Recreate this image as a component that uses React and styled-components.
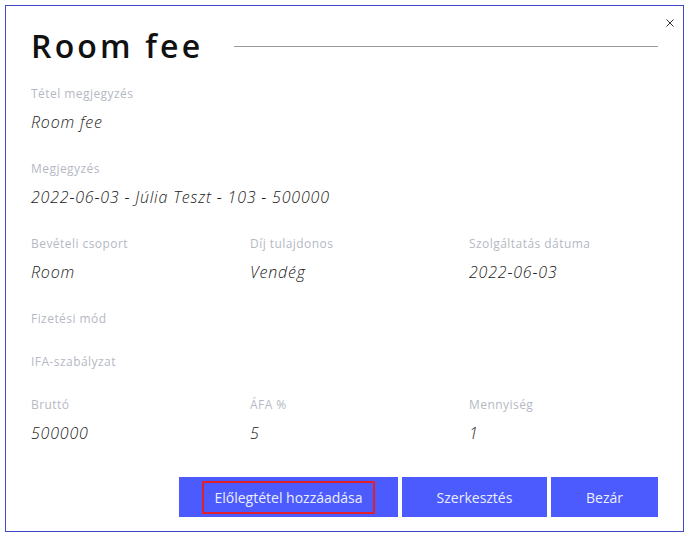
import React from "react";
import styled, { createGlobalStyle } from "styled-components";

const fields = [
    [{ label: "Tétel megjegyzés", value: "Room fee" }],
    [{ label: "Megjegyzés", value: "2022-06-03 - Júlia Teszt - 103 - 500000" }],
    [
        { label: "Bevételi csoport", value: "Room" },
        { label: "Díj tulajdonos", value: "Vendég" },
        { label: "Szolgáltatás dátuma", value: "2022-06-03" }
    ],
    [{ label: "Fizetési mód" }],
    [{ label: "IFA-szabályzat" }],
    [
        { label: "Bruttó", value: "500000" },
        { label: "ÁFA %", value: "5" },
        { label: "Mennyiség", value: "1" }
    ]
];

const buttons = [
    { text: "Előlegtétel hozzáadása", width: 219, focused: true },
    { text: "Szerkesztés", width: 145 },
    { text: "Bezár", width: 107 }
];

const App = () => (
    <>
        <GlobalStyle/>
        <Dialog>
            <Close aria-label="close">
                <svg width="8" height="8" viewBox="0 0 8 8">
                    <path d="M0.5 0.5L7.5 7.5M7.5 0.5L0.5 7.5" stroke="#333" strokeWidth="1"/>
                </svg>
            </Close>

            <Header>
                <Title>Room fee</Title>
                <Rule/>
            </Header>

            <Fields>
                { fields.map((row, i) =>
                    <Row key={i}>
                        { row.map(field =>
                            <Field key={field.label}>
                                <Label>{ field.label }</Label>
                                { field.value && <Value>{ field.value }</Value> }
                            </Field>
                        )}
                    </Row>
                )}
            </Fields>

            <Actions>
                { buttons.map(btn =>
                    <Button key={btn.text} width={btn.width}>
                        <ButtonText focused={btn.focused}>{ btn.text }</ButtonText>
                    </Button>
                )}
            </Actions>
        </Dialog>
    </>
);

const GlobalStyle = createGlobalStyle`
  body {
    margin: 0;
    background: #fff;
    font-family: "Open Sans", "DejaVu Sans", sans-serif;
  }
`;

const Dialog = styled.div`
  position: relative;
  box-sizing: border-box;
  width: 679px;
  height: 527px;
  margin: 5px;
  border: 1px solid #3f4bc4;
  padding: 20px 25px 0 25px;
  display: flex;
  flex-direction: column;
`;

const Close = styled.button`
  position: absolute;
  top: 13px;
  right: 9px;
  border: 0;
  background: none;
  padding: 0;
  display: flex;
  cursor: pointer;
`;

const Header = styled.div`
  display: flex;
  align-items: center;
  height: 40px;
`;

const Title = styled.h1`
  margin: 0;
  font-family: "Open Sans", sans-serif;
  font-size: 32px;
  line-height: 40px;
  font-weight: 600;
  letter-spacing: 3.2px;
  color: #111;
`;

const Rule = styled.div`
  flex: 1;
  height: 1px;
  margin-left: 31px;
  background: #9a9a9a;
`;

const Fields = styled.div`
  display: flex;
  flex-direction: column;
  gap: 27px;
  margin-top: 20px;
`;

const Row = styled.div`
  display: grid;
  grid-template-columns: repeat(3, 1fr);
  column-gap: 30px;
`;

const Field = styled.div`
  display: flex;
  flex-direction: column;
  gap: 9px;
`;

const Label = styled.div`
  font-size: 12px;
  line-height: 16px;
  letter-spacing: 0.45px;
  color: #b5b9c4;
  white-space: nowrap;
`;

const Value = styled.div`
  font-size: 16px;
  line-height: 23px;
  letter-spacing: 0.8px;
  font-style: italic;
  font-weight: 300;
  color: #222;
  white-space: nowrap;
`;

const Actions = styled.div`
  display: flex;
  justify-content: flex-end;
  gap: 4px;
  margin-top: 32px;
`;

const Button = styled.button`
  width: ${ props => props.width }px;
  height: 40px;
  border: 0;
  padding: 0;
  background: #4b5bfd;
  color: #eceeff;
  font-family: "Open Sans", sans-serif;
  font-size: 14px;
  font-weight: 500;
  display: flex;
  align-items: center;
  justify-content: center;
  cursor: pointer;
`;

const ButtonText = styled.span`
  padding: ${ props => props.focused ? "5px 10px" : "0" };
  border: ${ props => props.focused ? "2px solid #e0202c" : "0" };
  line-height: 19px;
`;

export default App;
